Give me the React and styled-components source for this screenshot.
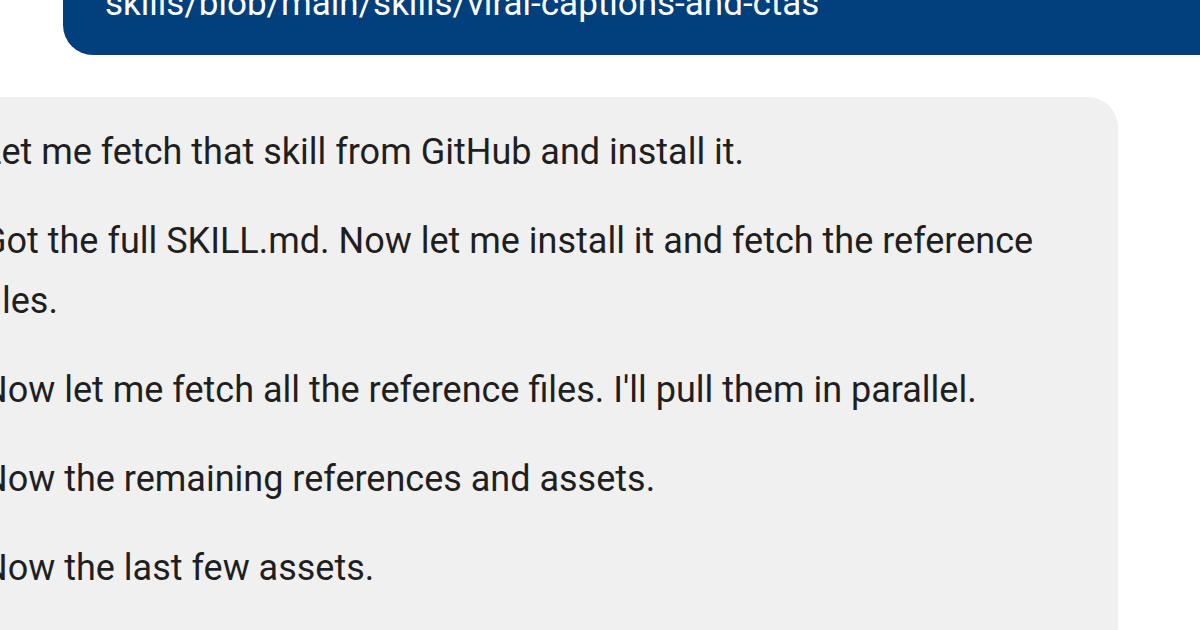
import styled, { createGlobalStyle } from "styled-components";

const GlobalStyle = createGlobalStyle`
html, body {
  margin: 0;
  padding: 0;
  background: #fff;
}
body {
  font-family: Roboto, "Noto Sans", "Liberation Sans", sans-serif;
  -webkit-font-smoothing: antialiased;
}
`

const Screen = styled.div`
width: 1200px;
height: 630px;
overflow: hidden;
background: #fff;
`

// chat column, scrolled so the user bubble is mostly above the top edge
const Thread = styled.div`
display: flex;
flex-direction: column;
gap: 42px;
margin: -83px 0 0 -40px;
width: 1280px;
`

const UserBubble = styled.div`
align-self: flex-end;
width: 1177px;
box-sizing: border-box;
background: #023f7d;
color: #fff;
border-radius: 0 0 0 30px;
padding: 0 40px 22px 42px;
font-size: 35px;
line-height: 58px;
white-space: nowrap;
`

const AssistantBubble = styled.div`
width: 1158px;
box-sizing: border-box;
background: #f0f0f0;
color: #1f1f1f;
border-radius: 30px;
padding: 25px 40px 40px 22px;
`

const Para = styled.p`
margin: 0 0 29px 0;
font-size: 36px;
line-height: 60px;
`

const messages = [
  "Let me fetch that skill from GitHub and install it.",
  "Got the full SKILL.md. Now let me install it and fetch the reference files.",
  "Now let me fetch all the reference files. I'll pull them in parallel.",
  "Now the remaining references and assets.",
  "Now the last few assets.",
];

const App = () => {
  return (
    <Screen>
      <GlobalStyle />
      <Thread>
        <UserBubble>
          Install this skill: https://github.com/creator-tools/social-
          <br />
          skills/blob/main/skills/viral-captions-and-ctas
        </UserBubble>
        <AssistantBubble>
          {
            messages.map((it, idx) => {
              return <Para key={idx}>{it}</Para>
            })
          }
        </AssistantBubble>
      </Thread>
    </Screen>
  )
}

export default App;
